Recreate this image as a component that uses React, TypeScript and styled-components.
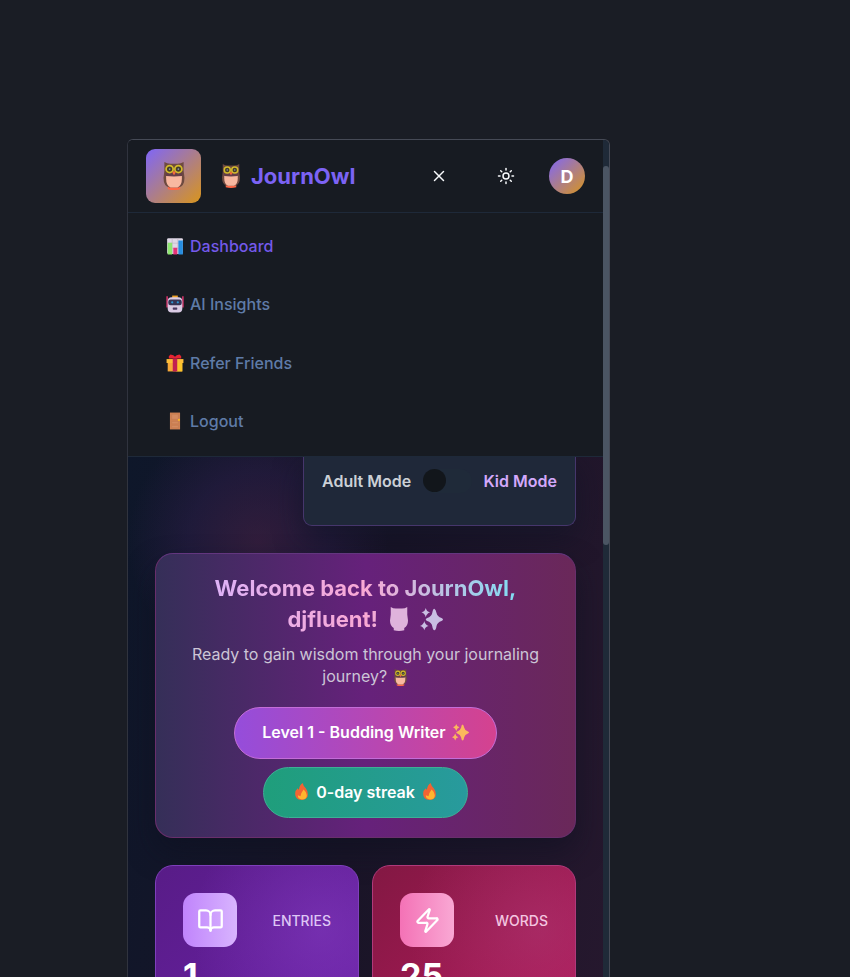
import React, { useId, useState } from "react";
import styled, { createGlobalStyle } from "styled-components";
import { BookOpen, Sun, X, Zap } from "lucide-react";

const GlobalStyle = createGlobalStyle`
  *, *::before, *::after { box-sizing: border-box; }
  html, body { margin: 0; background: #1a1d25; }
  body { font-family: Inter, "Liberation Sans", sans-serif; color: #fff; }
  button, input { font: inherit; }
  h1, p { margin: 0; }
  svg { display: block; flex: none; }
`;

const Page = styled.main`
  height: 100vh;
  overflow: hidden;
  padding: 139px 240px 0 127px;
  background: #1a1d25;
  display: flex;
`;

const Frame = styled.div`
  flex: 1;
  min-width: 0;
  display: flex;
  border: 1px solid #464a56;
  border-left-color: #30333e;
  border-bottom: 0;
  border-radius: 6px 6px 0 0;
  overflow: hidden;
  background: #171b22;
`;

const Screen = styled.div`
  flex: 1;
  min-width: 0;
  display: flex;
  flex-direction: column;
`;

const ScrollTrack = styled.div`
  width: 6px;
  padding-top: 26px;
  background: #1f2a38;
`;

const ScrollThumb = styled.div`
  height: 379px;
  border-radius: 4px;
  background: #4b5563;
`;

const Header = styled.header`
  flex: none;
  height: 73px;
  padding: 0 18px;
  display: flex;
  align-items: center;
  justify-content: space-between;
  border-bottom: 1px solid #1e2939;
  background: #171b22;
`;

const Brand = styled.a`
  display: flex;
  align-items: center;
  gap: 18px;
  color: #7c63f5;
  text-decoration: none;
`;

const Logo = styled.span`
  width: 55px;
  height: 54px;
  border-radius: 9px;
  display: grid;
  place-items: center;
  background: linear-gradient(135deg, #7f66f8, #d9951c);
`;

const BrandName = styled.span`
  display: flex;
  align-items: center;
  gap: 8px;
  font-size: 22px;
  line-height: 32px;
  font-weight: 700;
`;

const Tools = styled.div`
  display: flex;
  align-items: center;
  gap: 19px;
`;

const ToolButton = styled.button`
  width: 48px;
  height: 48px;
  padding: 0;
  display: grid;
  place-items: center;
  border: 0;
  border-radius: 8px;
  background: transparent;
  color: #f8fafc;
`;

const Avatar = styled.button`
  width: 36px;
  height: 36px;
  padding: 0;
  border: 0;
  border-radius: 50%;
  background: linear-gradient(135deg, #7f66f8, #d9951c);
  color: #fff;
  font-size: 18px;
  font-weight: 700;
`;

const Menu = styled.nav`
  position: relative;
  z-index: 1;
  flex: none;
  height: 244px;
  padding: 4px 38px 6px;
  display: grid;
  grid-template-rows: repeat(4, 1fr);
  border-bottom: 1px solid #1e2939;
  background: #171b22;
`;

const MenuLink = styled.a<{ $active?: boolean }>`
  display: flex;
  align-items: center;
  gap: 6px;
  font-size: 16px;
  font-weight: 500;
  color: ${(p) => (p.$active ? "#7459ea" : "#5f7ba8")};
  text-decoration: none;
`;

const Content = styled.section`
  flex: 1;
  padding: 0 27px;
  display: flex;
  flex-direction: column;
  background:
    radial-gradient(circle at 130px 85px, rgba(78, 36, 78, 0.5), rgba(60, 34, 92, 0.32) 70px, transparent 130px),
    linear-gradient(100deg, #0e172a 0%, #191427 50%, #26182e 100%);
`;

const ModePanel = styled.div`
  align-self: flex-end;
  width: 273px;
  height: 69px;
  flex: none;
  padding: 0 18px 20px;
  display: flex;
  align-items: center;
  justify-content: space-between;
  border: 1px solid #46366c;
  border-top: 0;
  border-radius: 0 0 9px 9px;
  background: #1f2839;
  box-shadow: 0 12px 28px rgba(16, 20, 38, 0.6);
  font-size: 16px;
  font-weight: 600;
  white-space: nowrap;
`;

const ModeLabel = styled.label<{ $kid?: boolean }>`
  color: ${(p) => (p.$kid ? "#d3a8fb" : "#cbd0d6")};
`;

const Switch = styled.input`
  appearance: none;
  width: 49px;
  height: 24px;
  margin: 0;
  border-radius: 12px;
  display: flex;
  background: #1f2a39;

  &::before {
    content: "";
    width: 23px;
    height: 23px;
    border-radius: 50%;
    background: #12161b;
  }
  &:checked { justify-content: flex-end; }
`;

const Welcome = styled.section`
  margin-top: 27px;
  flex: none;
  padding: 19px 27px 19px;
  display: flex;
  flex-direction: column;
  align-items: center;
  text-align: center;
  border: 1px solid #692f6c;
  border-top-color: #63367f;
  border-radius: 18px;
  background: linear-gradient(90deg, #352f58 0%, #66217b 50%, #6a2859 100%);
  box-shadow: 0 14px 28px rgba(12, 16, 32, 0.5);
`;

const Title = styled.h1`
  padding: 0 8px;
  font-size: 22px;
  line-height: 31px;
  font-weight: 700;
  color: transparent;
  background: linear-gradient(90deg, #d8b4fe, #f9a8d4 50%, #67e8f9) text;
`;

const InlineGlyph = styled.span`
  display: inline-block;
  vertical-align: -4px;
`;

const TitleGlyph = styled(InlineGlyph)`
  margin-left: 4px;
`;

const Lead = styled.p`
  margin: 8px 0 20px;
  font-size: 16px;
  line-height: 22px;
  color: #ccc5d6;
`;

const Pill = styled.div<{ $tone: "level" | "streak" }>`
  height: ${(p) => (p.$tone === "level" ? 52 : 51)}px;
  padding: 0 ${(p) => (p.$tone === "level" ? 27 : 29)}px 2px;
  display: flex;
  align-items: center;
  gap: 6px;
  border-radius: 26px;
  border: 1px solid ${(p) => (p.$tone === "level" ? "#c46dd8" : "#3db095")};
  background: ${(p) =>
    p.$tone === "level"
      ? "linear-gradient(90deg, #954ddb, #d5428f)"
      : "linear-gradient(90deg, #1f9e7b, #289a9d)"};
  font-size: 16px;
  font-weight: 600;
  & + & { margin-top: 8px; }
`;

const Stats = styled.div`
  margin-top: 27px;
  display: grid;
  grid-template-columns: 1fr 1fr;
  gap: 13px;
`;

const StatCard = styled.article<{ $pink?: boolean }>`
  height: 170px;
  padding: 27px;
  border: 1px solid ${(p) => (p.$pink ? "#b0397a" : "#7f3fbb")};
  border-radius: 18px;
  background:
    radial-gradient(circle at 82% 38%, ${(p) => (p.$pink ? "rgba(176, 60, 120, 0.45)" : "rgba(134, 62, 195, 0.5)")}, transparent 66%),
    ${(p) => (p.$pink ? "linear-gradient(135deg, #831843, #b31a5c)" : "linear-gradient(135deg, #581c87, #6b21a8)")};
`;

const StatTop = styled.div`
  display: flex;
  align-items: center;
  justify-content: space-between;
`;

const StatIcon = styled.span<{ $pink?: boolean }>`
  width: 54px;
  height: 54px;
  border-radius: 13px;
  display: grid;
  place-items: center;
  background: ${(p) => (p.$pink ? "linear-gradient(90deg, #f472b6, #f9a8d4)" : "linear-gradient(90deg, #c084fc, #d8b4fe)")};
`;

const StatLabel = styled.span<{ $pink?: boolean }>`
  font-size: 14px;
  font-weight: 500;
  color: ${(p) => (p.$pink ? "#f4c6e0" : "#dec6f5")};
`;

const StatValue = styled.p`
  margin-top: 9px;
  font-size: 34px;
  line-height: 40px;
  font-weight: 700;
`;

const owlBody =
  "M5 0Q8 2 12 2h8q4 0 7-2v10l1 8q0 7-5 10v3q-7 2-14 0v-3q-5-3-5-10l1-8Z";

function Owl({ size, silhouette }: { size: number; silhouette?: string }) {
  if (silhouette) {
    return (
      <svg width={size} height={size} viewBox="0 0 32 32" aria-hidden="true">
        <path d={owlBody} fill={silhouette} />
      </svg>
    );
  }
  return (
    <svg width={size} height={size} viewBox="0 0 32 32" aria-hidden="true">
      <path d="M9 26h14v5q-7 2-14 0Z" fill="#ff6846" />
      <path d="M5 0Q8 2 12 2h8q4 0 7-2v10l1 8q0 10-7 11H11q-7-1-7-11l1-8Z" fill="#6e4a40" />
      <path d="M7 14q9-2 18 0v5q0 8-5 10h-8q-5-2-5-10Z" fill="#f8b8a0" />
      <path d="M6 13q10-2 20 0l-1 3q-9 1-18 0Z" fill="#633d48" />
      <circle cx="11" cy="8" r="4" fill="#433b2c" stroke="#d2ba2a" strokeWidth="2" />
      <circle cx="21" cy="8" r="4" fill="#433b2c" stroke="#d2ba2a" strokeWidth="2" />
      <circle cx="11" cy="8" r="1" fill="#8e98a0" />
      <circle cx="21" cy="8" r="1" fill="#8e98a0" />
      <path d="m14 12 2-2 2 2-2 3Z" fill="#f56b3c" />
    </svg>
  );
}

function ChartEmoji() {
  return (
    <svg width="18" height="18" viewBox="0 0 32 32" aria-hidden="true">
      <rect x="2" y="2" width="28" height="28" rx="2" fill="#e0d8e6" />
      <path d="M2 11h28M2 20h28M11 2v28M21 2v28" stroke="#b9afc1" />
      <path d="M3 10h8v21H3z" fill="#8ee670" />
      <path d="M13 19h7v12h-7z" fill="#e53277" />
      <path d="M22 6h8v25h-8z" fill="#268de0" />
    </svg>
  );
}

function RobotEmoji() {
  return (
    <svg width="18" height="18" viewBox="0 0 32 32" aria-hidden="true">
      <path d="M2 2v20M30 2v20" stroke="#c53264" strokeWidth="3" />
      <path d="M11 1h10v6H11z" fill="#efa224" />
      <rect x="3" y="4" width="26" height="27" rx="7" fill="#dacbe4" />
      <rect x="4" y="8" width="24" height="10" rx="4" fill="#353354" />
      <circle cx="11" cy="13" r="2" fill="#2b96d6" />
      <circle cx="21" cy="13" r="2" fill="#2b96d6" />
      <rect x="12" y="22" width="8" height="4" rx="1" fill="#4b3a63" />
    </svg>
  );
}

function GiftEmoji() {
  return (
    <svg width="18" height="18" viewBox="0 0 32 32" aria-hidden="true">
      <path d="M3 13h26v18H3z" fill="#f7a839" />
      <path d="M18 13h11v18H18z" fill="#fbc52b" />
      <path d="M1 9h30v7H1z" fill="#fdbd37" />
      <path d="M12 8h8v23h-8z" fill="#c22050" />
      <path d="M16 8H5V4l3-3 5 1 3 3 3-3 5-1 3 3v4Z" fill="#e72333" />
    </svg>
  );
}

function DoorEmoji() {
  return (
    <svg width="18" height="18" viewBox="0 0 32 32" aria-hidden="true">
      <path d="M7 1h18v30H7z" fill="#ce8053" />
      <path d="M10 4h12v9H10zM10 17h12v4H10zM10 24h12v4H10z" fill="#d48b61" stroke="#c47b50" />
      <circle cx="23" cy="14" r="2" fill="#f8b52c" />
    </svg>
  );
}

function Sparkles({ size, color }: { size: number; color: string }) {
  return (
    <svg width={size} height={size} viewBox="0 0 32 32" fill={color} aria-hidden="true">
      <path d="M20 1q2 1 3 6 1 5 7 7 2 1 2 2t-2 2q-6 2-7 7-1 6-3 6t-3-6q-1-5-7-7-2-1-2-2t2-2q6-2 7-7 1-6 3-6Z" />
      <path d="M8 0q1 5 6 6-5 2-6 7-1-5-6-7 5-1 6-6ZM6 18q1 5 6 7-5 1-6 6-1-5-6-6 5-2 6-7Z" />
    </svg>
  );
}

function Flame() {
  return (
    <svg width="17" height="17" viewBox="0 0 32 32" aria-hidden="true">
      <path d="M18 0q2 7 6 10 4 5 4 11 0 10-12 11Q4 31 4 20q0-6 5-10l2 3Q12 4 18 0Z" fill="#f26433" />
      <path d="M20 12q6 5 6 11 0 8-9 8-8-1-8-8l5 2q1-7 6-13Z" fill="#ffb52e" />
    </svg>
  );
}

const links = [
  { label: "Dashboard", icon: <ChartEmoji />, active: true },
  { label: "AI Insights", icon: <RobotEmoji /> },
  { label: "Refer Friends", icon: <GiftEmoji /> },
  { label: "Logout", icon: <DoorEmoji /> },
];

export default function App() {
  const [kid, setKid] = useState(false);
  const modeId = useId();
  return (
    <>
      <GlobalStyle />
      <Page>
        <Frame>
          <Screen>
            <Header>
              <Brand href="#">
                <Logo><Owl size={28} /></Logo>
                <BrandName><Owl size={24} />JournOwl</BrandName>
              </Brand>
              <Tools>
                <ToolButton aria-label="Close menu"><X size={18} /></ToolButton>
                <ToolButton aria-label="Switch theme"><Sun size={18} /></ToolButton>
                <Avatar aria-label="Account">D</Avatar>
              </Tools>
            </Header>
            <Menu>
              {links.map((l) => (
                <MenuLink key={l.label} href="#" $active={l.active}>{l.icon}{l.label}</MenuLink>
              ))}
            </Menu>
            <Content>
              <ModePanel>
                <ModeLabel htmlFor={modeId}>Adult Mode</ModeLabel>
                <Switch id={modeId} type="checkbox" role="switch" checked={kid} onChange={(e) => setKid(e.target.checked)} />
                <ModeLabel htmlFor={modeId} $kid>Kid Mode</ModeLabel>
              </ModePanel>
              <Welcome>
                <Title>
                  Welcome back to JournOwl, djfluent!{" "}
                  <TitleGlyph><Owl size={24} silhouette="#dfb3dc" /></TitleGlyph>{" "}
                  <TitleGlyph><Sparkles size={23} color="#c9bfe3" /></TitleGlyph>
                </Title>
                <Lead>
                  Ready to gain wisdom through your journaling journey?{" "}
                  <InlineGlyph><Owl size={17} /></InlineGlyph>
                </Lead>
                <Pill $tone="level">Level 1 - Budding Writer <Sparkles size={17} color="#fbb95c" /></Pill>
                <Pill $tone="streak"><Flame />0-day streak<Flame /></Pill>
              </Welcome>
              <Stats>
                <StatCard>
                  <StatTop>
                    <StatIcon><BookOpen size={27} /></StatIcon>
                    <StatLabel>ENTRIES</StatLabel>
                  </StatTop>
                  <StatValue>1</StatValue>
                </StatCard>
                <StatCard $pink>
                  <StatTop>
                    <StatIcon $pink><Zap size={27} /></StatIcon>
                    <StatLabel $pink>WORDS</StatLabel>
                  </StatTop>
                  <StatValue>25</StatValue>
                </StatCard>
              </Stats>
            </Content>
          </Screen>
          <ScrollTrack><ScrollThumb /></ScrollTrack>
        </Frame>
      </Page>
    </>
  );
}
